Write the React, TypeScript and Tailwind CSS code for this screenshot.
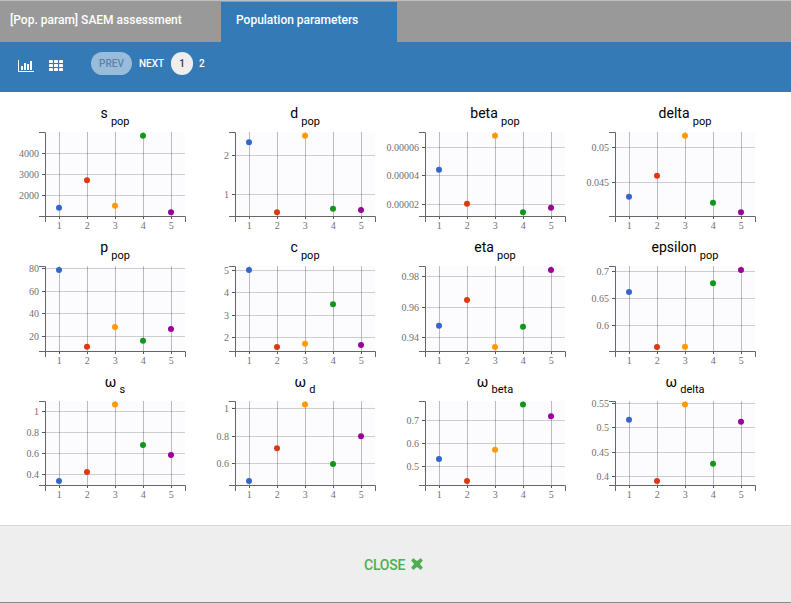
type Tick = [label: string, y: number];

interface Chart {
  name: string;
  sub: string;
  height: number;
  ticks: Tick[];
  dots: number[];
}

const COLORS = ["#3366cc", "#dc3912", "#ff9900", "#109618", "#990099"];

const CHARTS: Chart[] = [
  { name: "s", sub: "pop", height: 84, ticks: [["4000", 21], ["3000", 42], ["2000", 63]], dots: [75.7, 48.3, 73.7, 3.7, 80.3] },
  { name: "d", sub: "pop", height: 84, ticks: [["2", 23], ["1", 62]], dots: [10.3, 80.3, 3.7, 76.7, 78] },
  { name: "beta", sub: "pop", height: 84, ticks: [["0.00006", 15], ["0.00004", 43], ["0.00002", 72]], dots: [37.7, 71.7, 3.7, 80.3, 75.7] },
  { name: "delta", sub: "pop", height: 84, ticks: [["0.05", 15], ["0.045", 50]], dots: [64.7, 43.8, 3.7, 70.7, 80.3] },
  { name: "p", sub: "pop", height: 85, ticks: [["80", 2], ["60", 25], ["40", 47], ["20", 70]], dots: [4, 80.8, 61, 74.7, 63] },
  { name: "c", sub: "pop", height: 85, ticks: [["5", 4], ["4", 26], ["3", 49], ["2", 71]], dots: [4, 81, 77.7, 38.3, 79] },
  { name: "eta", sub: "pop", height: 85, ticks: [["0.98", 10], ["0.96", 41], ["0.94", 71]], dots: [59.8, 34, 81, 60.7, 4] },
  { name: "epsilon", sub: "pop", height: 85, ticks: [["0.7", 5], ["0.65", 32], ["0.6", 59]], dots: [26, 81, 80.7, 17.3, 4] },
  { name: "ω", sub: "s", height: 84, ticks: [["1", 10], ["0.8", 31], ["0.6", 52], ["0.4", 73]], dots: [80, 71, 3.5, 44, 54] },
  { name: "ω", sub: "d", height: 84, ticks: [["1", 7], ["0.8", 35], ["0.6", 62]], dots: [80, 47.3, 3.5, 63, 35.3] },
  { name: "ω", sub: "beta", height: 84, ticks: [["0.7", 19], ["0.6", 42], ["0.5", 65]], dots: [58, 80, 48.8, 3.5, 15.3] },
  { name: "ω", sub: "delta", height: 84, ticks: [["0.55", 2], ["0.5", 26], ["0.45", 51], ["0.4", 75]], dots: [18.7, 80, 3.5, 62.7, 20.7] },
];

function ScatterChart({ chart }: { chart: Chart }) {
  const h = chart.height;
  const subDy = chart.name === "ω" ? 6 : 7;
  return (
    <svg width="190" height="134" className="block overflow-visible">
      <text x="115" y="20" textAnchor="middle" className="fill-black font-['Roboto','Noto_Sans',sans-serif] text-[14px]">
        {chart.name}
        <tspan dx="3.2" dy={subDy} className="text-[11px]">{chart.sub}</tspan>
      </text>
      <g transform="translate(45 34)">
        <rect width="140" height={h} fill="#fcfcff" />
        {chart.ticks.map(([label, y]) => (
          <g key={label}>
            <path d={`M1 ${y + 0.5}H140`} stroke="#000" strokeOpacity="0.18" />
            <path d={`M-3 ${y + 0.5}H0`} stroke="#555" />
            <text x="-6" y={y + 4} textAnchor="end" className="fill-[#707070] font-['Liberation_Serif',serif] text-[10px]">
              {label}
            </text>
          </g>
        ))}
        {COLORS.map((color, i) => (
          <g key={color}>
            <path d={`M${14.5 + 28 * i} 0V${h}`} stroke="#000" strokeOpacity="0.26" />
            <path d={`M${14.5 + 28 * i} ${h}v3`} stroke="#555" />
            <text x={14.2 + 28 * i} y={h + 13} textAnchor="middle" className="fill-[#707070] font-['Liberation_Serif',serif] text-[10px]">
              {i + 1}
            </text>
          </g>
        ))}
        <path d={`M-6 0.5H0.5V${h + 0.5}H-6`} fill="none" stroke="#666" />
        <path d={`M0.5 ${h + 6}V${h + 0.5}H140.5V${h + 6}`} fill="none" stroke="#666" />
        {chart.dots.map((y, i) => (
          <circle key={i} cx={14 + 28 * i} cy={y} r="3" fill={COLORS[i]} />
        ))}
      </g>
    </svg>
  );
}

function HistogramIcon() {
  return (
    <svg width="16" height="12" shapeRendering="crispEdges" fill="#fff">
      <path d="M0 0h1v11h15v1H0zM3 6h2v4H3zM6 3h2v7H6zM9 4h2v6H9zM12 1h2v9h-2z" />
    </svg>
  );
}

function GridIcon() {
  return (
    <svg width="14" height="11" fill="#fff">
      {[0, 4, 8].map((y) =>
        [0, 5, 10].map((x) => <rect key={`${x}-${y}`} x={x} y={y} width="4" height="3" rx="0.4" />),
      )}
    </svg>
  );
}

function RemoveIcon() {
  return (
    <svg width="12" height="12" viewBox="0 0 12 12" fill="#4caf50">
      <path d="M2.8.4 6 3.1 9.2.4a.6.6 0 0 1 .8 0L11.6 2a.6.6 0 0 1 0 .8L8.9 6l2.7 3.2a.6.6 0 0 1 0 .8L10 11.6a.6.6 0 0 1-.8 0L6 8.9l-3.2 2.7a.6.6 0 0 1-.8 0L.4 10a.6.6 0 0 1 0-.8L3.1 6 .4 2.8a.6.6 0 0 1 0-.8L2 .4a.6.6 0 0 1 .8 0z" />
    </svg>
  );
}

export default function App() {
  return (
    <div className="flex h-[603px] w-[791px] flex-col overflow-hidden bg-white font-['Roboto',sans-serif]">
      <header className="flex h-[42px] shrink-0 border-t border-[#bcc0be] bg-[#999] text-[12px] font-medium leading-[14px] text-white">
        <div className="w-[221px] pl-[10px] pt-[12px]">[Pop. param] SAEM assessment</div>
        <div className="mt-px w-[176px] bg-[#337ab7] pl-[15px] pt-[11px]">Population parameters</div>
      </header>
      <nav className="flex h-[50px] shrink-0 items-start bg-[#337ab7] text-[10px] font-medium leading-[23px] text-white">
        <div className="ml-[18px] mt-[18px]"><HistogramIcon /></div>
        <div className="ml-[15px] mt-[18px]"><GridIcon /></div>
        <button className="ml-7 mt-[10px] h-[23px] w-[41px] rounded-full bg-[#99bcdb] text-[#5c83a8]">PREV</button>
        <button className="ml-[7px] mt-[10px] w-[25px] text-left">NEXT</button>
        <button className="ml-[7px] mt-[10px] h-[23px] w-[22px] rounded-full bg-[#eee] text-[#333]">1</button>
        <button className="ml-[6px] mt-[10px]">2</button>
      </nav>
      <main className="grid h-[433px] shrink-0 grid-cols-[repeat(4,190px)] grid-rows-[134px_135px_134px] pt-[6px]">
        {CHARTS.map((chart, i) => (
          <ScatterChart key={i} chart={chart} />
        ))}
      </main>
      <footer className="flex min-h-0 flex-1 items-start border-b border-t border-b-[#888] border-t-[#d8d8d8] bg-[#eee]">
        <button className="ml-[364px] mt-[30px] flex h-4 items-center text-[14px] font-medium leading-4 text-[#4caf50]">
          <span className="w-[47px] pt-px text-left tracking-[-0.25px]">CLOSE</span>
          <span className="-mt-px"><RemoveIcon /></span>
        </button>
      </footer>
    </div>
  );
}
